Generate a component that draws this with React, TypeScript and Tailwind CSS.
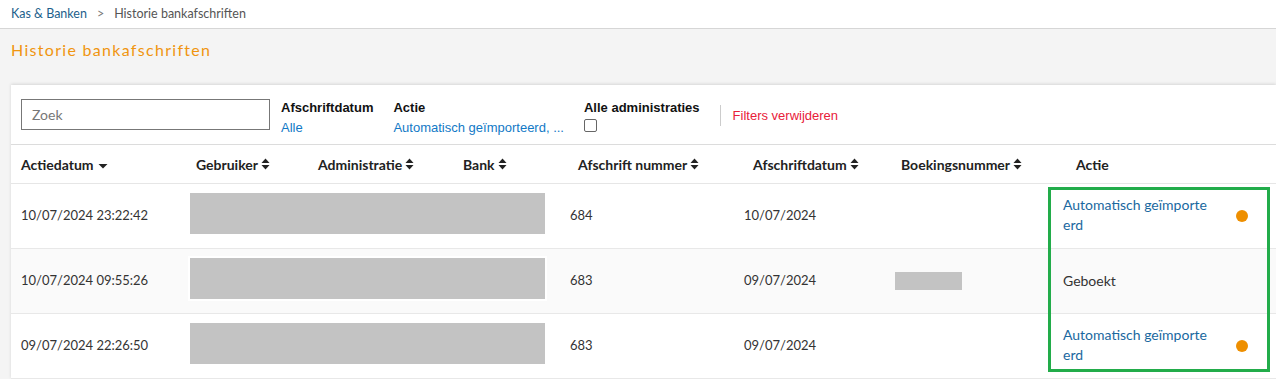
import React from "react";

const SortBoth = () => (
  <svg width="9" height="12" viewBox="0 0 9 12" className="ml-[3px] inline-block">
    <path d="M0.5 5 L4.5 0.5 L8.5 5 Z" fill="#222" />
    <path d="M0.5 7 L4.5 11.5 L8.5 7 Z" fill="#222" />
  </svg>
);

const SortDown = () => (
  <svg width="10" height="12" viewBox="0 0 10 12" className="ml-[4px] inline-block">
    <path d="M0.5 6 L5 10.5 L9.5 6 Z" fill="#222" />
  </svg>
);

const Block = ({ w, h }: { w: number; h: number }) => (
  <div className="bg-[#c3c3c3]" style={{ width: w, height: h }} />
);

type Row = {
  date: string;
  nr: string;
  adate: string;
  boek: boolean;
  actie: "auto" | "geboekt";
  bg: string;
};

const rows: Row[] = [
  { date: "10/07/2024 23:22:42", nr: "684", adate: "10/07/2024", boek: false, actie: "auto", bg: "bg-white" },
  { date: "10/07/2024 09:55:26", nr: "683", adate: "09/07/2024", boek: true, actie: "geboekt", bg: "bg-[#fafafa]" },
  { date: "09/07/2024 22:26:50", nr: "683", adate: "09/07/2024", boek: false, actie: "auto", bg: "bg-white" },
];

export default function App() {
  const font = { fontFamily: "Lato, 'Noto Sans', sans-serif" };
  const arial = { fontFamily: "'Liberation Sans', Arial, sans-serif" };
  return (
    <div className="w-[1276px] h-[379px] overflow-hidden bg-[#f4f4f4] relative" style={font}>
      {/* breadcrumb */}
      <div className="h-[29px] bg-white border-b border-[#d6d6d6] flex items-center pl-[11px] text-[12.5px]">
        <span className="text-[#1d5f8c]">Kas &amp; Banken</span>
        <span className="text-[#777] mx-[10px]">&gt;</span>
        <span className="text-[#555]">Historie bankafschriften</span>
      </div>
      {/* title */}
      <div className="h-[56px] pl-[11px] pt-[9px]">
        <h1 className="text-[16px] tracking-[1.3px] text-[#f0950f]">Historie bankafschriften</h1>
      </div>
      {/* card */}
      <div className="ml-[11px] bg-white shadow-[0_-1px_3px_rgba(0,0,0,0.12)] relative">
        {/* filter bar */}
        <div className="h-[60px] flex items-start pl-[10px] border-b border-[#dcdcdc]">
          <div className="mt-[14px] w-[249px] h-[31px] border border-[#777] flex items-center pl-[10px] text-[14px] text-[#777]">
            Zoek
          </div>
          <div className="ml-[11px] mt-[13px] text-[13px] leading-[20px]" style={arial}>
            <div className="font-bold text-[#111]">Afschriftdatum</div>
            <div className="text-[#1279c6]">Alle</div>
          </div>
          <div className="ml-[20px] mt-[13px] text-[13px] leading-[20px]" style={arial}>
            <div className="font-bold text-[#111]">Actie</div>
            <div className="text-[#1279c6]">Automatisch geïmporteerd, ...</div>
          </div>
          <div className="ml-[20px] mt-[13px] text-[13px] leading-[20px]" style={arial}>
            <div className="font-bold text-[#111]">Alle administraties</div>
            <div className="mt-[1px] w-[13px] h-[13px] border border-[#666] rounded-[2px]" />
          </div>
          <div className="ml-[20px] mt-[20px] w-px h-[21px] bg-[#ccc]" />
          <div className="ml-[12px] mt-[21px] text-[13px] text-[#e8203a]" style={arial}>
            Filters verwijderen
          </div>
        </div>
        {/* header */}
        <div className="h-[39px] flex items-center text-[14px] font-bold text-[#222] border-b border-[#e6e6e6]">
          <div className="w-[172px] pl-[10px] flex items-center">Actiedatum<SortDown /></div>
          <div className="w-[128px] pl-[13px] flex items-center">Gebruiker<SortBoth /></div>
          <div className="w-[145px] pl-[7px] flex items-center">Administratie<SortBoth /></div>
          <div className="w-[107px] pl-[7px] flex items-center">Bank<SortBoth /></div>
          <div className="w-[174px] pl-[15px] flex items-center">Afschrift nummer<SortBoth /></div>
          <div className="w-[151px] pl-[16px] flex items-center">Afschriftdatum<SortBoth /></div>
          <div className="w-[168px] pl-[13px] flex items-center">Boekingsnummer<SortBoth /></div>
          <div className="flex-1 pl-[20px]">Actie</div>
        </div>
        {/* rows */}
        {rows.map((r, i) => (
          <div key={i} className={`h-[65px] flex items-center text-[13px] text-[#333] border-b border-[#e8e8e8] ${r.bg}`}>
            <div className="w-[172px] pl-[10px]">{r.date}</div>
            <div className="w-[380px] pl-[7px]">
              <div className={i === 1 ? "inline-block p-[2px] bg-white -ml-[2px]" : "inline-block"}>
                <Block w={355} h={41} />
              </div>
            </div>
            <div className="w-[174px] pl-[7px]">{r.nr}</div>
            <div className="w-[151px] pl-[7px]">{r.adate}</div>
            <div className="w-[168px] pl-[7px]">{r.boek ? <Block w={67} h={18} /> : null}</div>
            <div className="flex-1 pl-[7px] flex items-center text-[14px]">
              {r.actie === "auto" ? (
                <>
                  <div className="w-[166px] text-[#1a68a0] leading-[20px] -mt-[2px]">
                    <div>Automatisch geïmporte</div>
                    <div>erd</div>
                  </div>
                  <div className="ml-[7px] w-[12px] h-[12px] rounded-full bg-[#ee8f00]" />
                </>
              ) : (
                <div className="text-[#333] -mt-[2px]">Geboekt</div>
              )}
            </div>
          </div>
        ))}
        {/* green highlight overlay */}
        <div className="absolute left-[1037px] top-[102px] w-[222px] h-[185px] border-[3px] border-[#22ac4a] pointer-events-none" />
      </div>
    </div>
  );
}
